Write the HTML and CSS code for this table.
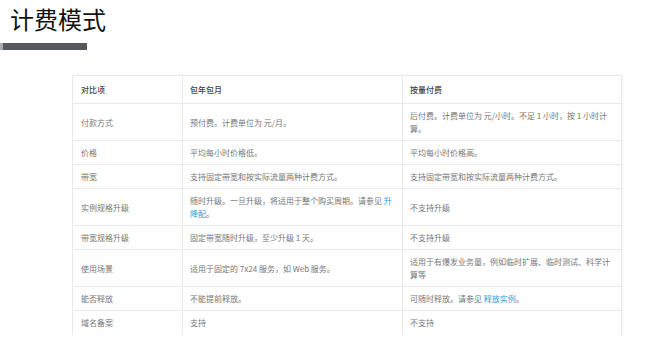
FILE: index.html
```html
<!DOCTYPE html>
<html lang="zh-CN">
<head>
<meta charset="utf-8">
<title>计费模式</title>
<link rel="stylesheet" href="styles.css">
</head>
<body>
<header class="heading">
  <h1 class="title">计费模式</h1>
  <div class="title-bar"></div>
</header>
<main class="content">
  <table class="compare">
    <colgroup>
      <col class="c1"><col class="c2"><col class="c3">
    </colgroup>
    <thead>
      <tr><th>对比项</th><th>包年包月</th><th>按量付费</th></tr>
    </thead>
    <tbody>
      <tr><td>付款方式</td><td>预付费。计费单位为 元/月。</td><td>后付费。计费单位为 元/小时。不足 1 小时，按 1 小时计<wbr>算。</td></tr>
      <tr><td>价格</td><td>平均每小时价格低。</td><td>平均每小时价格高。</td></tr>
      <tr><td>带宽</td><td>支持固定带宽和按实际流量两种计费方式。</td><td>支持固定带宽和按实际流量两种计费方式。</td></tr>
      <tr><td>实例规格升级</td><td>随时升级。一旦升级，将适用于整个购买周期。请参见 <a class="link" href="#">升<wbr>降配</a>。</td><td>不支持升级</td></tr>
      <tr><td>带宽规格升级</td><td>固定带宽随时升级，至少升级 1 天。</td><td>不支持升级</td></tr>
      <tr><td>使用场景</td><td>适用于固定的 7x24 服务，如 Web 服务。</td><td>适用于有爆发业务量，例如临时扩展、临时测试、科学计<wbr>算等</td></tr>
      <tr><td>能否释放</td><td>不能提前释放。</td><td>可随时释放。请参见 <a class="link" href="#">释放实例</a>。</td></tr>
      <tr class="last"><td>域名备案</td><td>支持</td><td>不支持</td></tr>
    </tbody>
  </table>
</main>
</body>
</html>
```

FILE: styles.css
```css
html, body {
  margin: 0;
  padding: 0;
  background: #ffffff;
}

body {
  font-family: "Noto Sans CJK SC", "Noto Sans", sans-serif;
  color: #777777;
}

.heading {
  padding-top: 3px;
}

.title {
  margin: 0;
  padding-left: 10px;
  font-size: 24px;
  line-height: 32px;
  font-weight: 400;
  color: #111111;
}

.title-bar {
  margin-top: 8px;
  width: 84px;
  height: 7px;
  background: #55595e;
  border-left: 3px solid #a9acaf;
}

.content {
  padding: 25px 0 0 72px;
}

.compare {
  border-collapse: collapse;
  table-layout: fixed;
  width: 549px;
  font-size: 8px;
  line-height: 13px;
  box-shadow: 1px 0 4px rgba(0, 0, 0, 0.04);
}

.c1 { width: 110px; }
.c2 { width: 220px; }
.c3 { width: 219px; }

.compare th,
.compare td {
  border: 1px solid #e9e9e9;
  text-align: left;
  vertical-align: middle;
  padding: 5px 9px 5px 7px;
}

.compare th {
  padding-top: 7px;
  padding-bottom: 7px;
  color: #444444;
  font-weight: 500;
}

.compare td:first-child,
.compare th:first-child {
  padding-left: 8px;
}

.compare .last td {
  border-bottom-color: transparent;
}

.link {
  color: #2a9fd6;
  text-decoration: none;
}
```
